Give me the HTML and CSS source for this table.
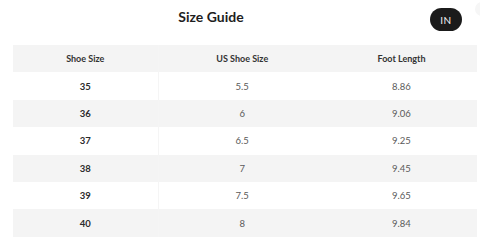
FILE: index.html
```html
<!DOCTYPE html>
<html lang="en">
<head>
<meta charset="utf-8">
<title>Size Guide</title>
<link rel="stylesheet" href="styles.css">
</head>
<body>
<div class="page">
  <div class="top">
    <h1 class="title">Size Guide</h1>
    <button class="unit">IN</button>
  </div>
  <table class="guide">
    <colgroup>
      <col class="c1"><col class="c2"><col class="c3">
    </colgroup>
    <thead>
      <tr><th>Shoe Size</th><th>US Shoe Size</th><th>Foot Length</th></tr>
    </thead>
    <tbody>
      <tr><td class="size">35</td><td>5.5</td><td>8.86</td></tr>
      <tr><td class="size">36</td><td>6</td><td>9.06</td></tr>
      <tr><td class="size">37</td><td>6.5</td><td>9.25</td></tr>
      <tr><td class="size">38</td><td>7</td><td>9.45</td></tr>
      <tr><td class="size">39</td><td>7.5</td><td>9.65</td></tr>
      <tr><td class="size">40</td><td>8</td><td>9.84</td></tr>
    </tbody>
  </table>
  <span class="close"></span>
</div>
</body>
</html>
```
FILE: styles.css
```css
html, body {
  margin: 0;
  padding: 0;
  background: #fff;
}
body {
  font-family: Lato, "Liberation Sans", sans-serif;
  color: #2b2b2b;
  width: 480px;
  height: 245px;
  overflow: hidden;
}
.page {
  position: relative;
  padding: 0 3px 0 13px;
}
.top {
  display: flex;
  align-items: flex-start;
  height: 45px;
}
.title {
  flex: 1;
  margin: 0;
  padding-top: 8px;
  text-align: center;
  font-size: 14px;
  line-height: 18px;
  font-weight: 700;
  color: #1e1e1e;
}
.unit {
  margin: 8px 15px 0 21px;
  width: 32px;
  height: 23px;
  padding: 0;
  border: none;
  border-radius: 12px;
  background: #1b1b1b;
  color: #f2f2f2;
  font-family: Lato, "Liberation Sans", sans-serif;
  font-size: 10px;
  font-weight: 400;
  letter-spacing: 0.6px;
}
.guide {
  width: 464px;
  border-collapse: collapse;
  table-layout: fixed;
  font-size: 9.5px;
}
.c1 { width: 145px; }
.c2 { width: 168px; }
.c3 { width: 151px; }
.guide th,
.guide td {
  height: 27.4px;
  padding: 0;
  text-align: center;
  vertical-align: middle;
}
.guide th {
  font-size: 9px;
  font-weight: 700;
  color: #333;
}
.guide td {
  color: #5a5a5a;
}
.guide td.size {
  font-weight: 700;
  color: #2b2b2b;
}
.guide thead tr,
.guide tbody tr:nth-child(even) {
  background: #f4f4f4;
}
.guide th:first-child,
.guide td:first-child {
  border-right: 1px solid #f5f5f5;
}
.close {
  position: absolute;
  top: 2px;
  left: 475px;
  width: 14px;
  height: 14px;
  border-radius: 50%;
  background: #f6f6f6;
}
```
